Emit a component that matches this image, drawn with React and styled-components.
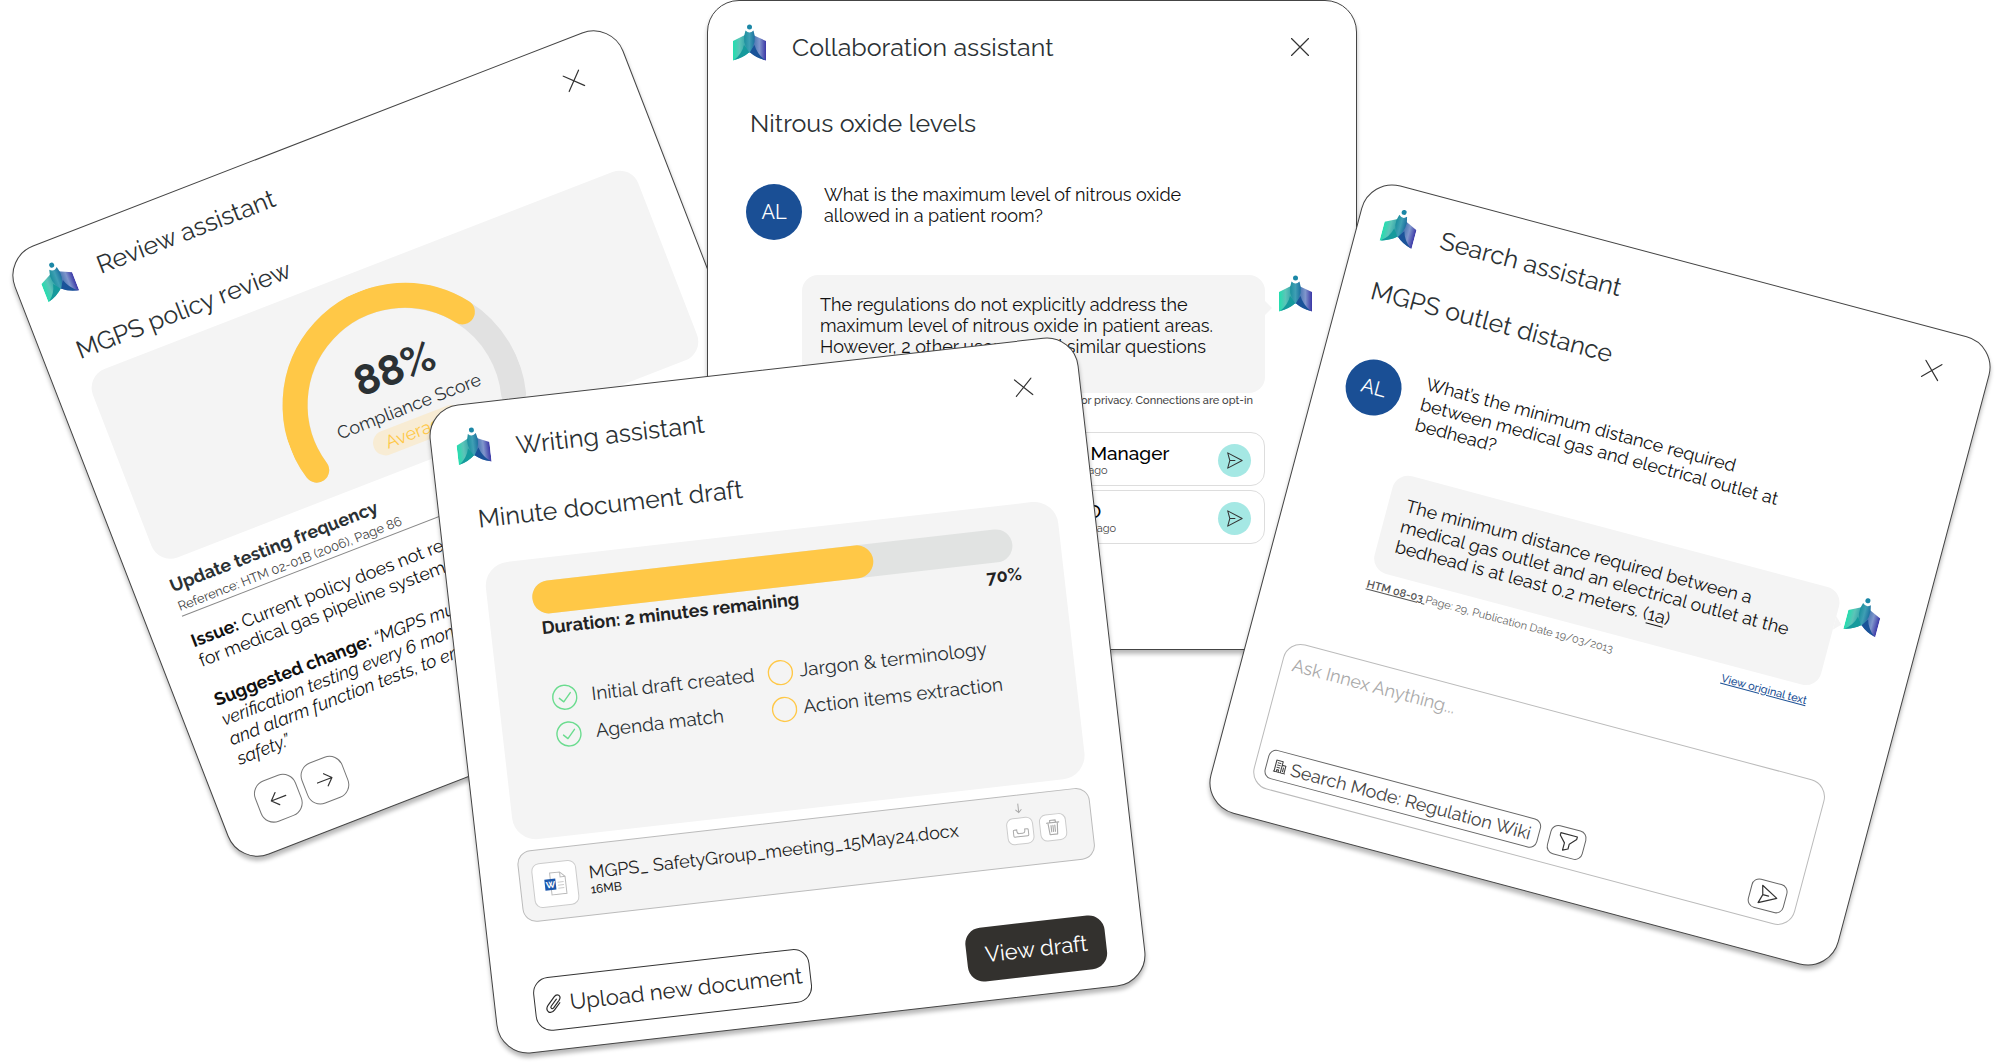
import React from "react";
import styled, { createGlobalStyle } from "styled-components";

const Logo = () => (
  <LogoSvg viewBox="0 0 33 37" aria-hidden="true">
    <defs>
      <linearGradient id="pageLeft" x1="0" y1="0" x2="1" y2="0">
        <stop offset="0" stopColor="#22dfae" />
        <stop offset="0.4" stopColor="#5cc4b8" />
        <stop offset="1" stopColor="#1d8fa0" />
      </linearGradient>
      <linearGradient id="pageRight" x1="0" y1="0" x2="1" y2="0">
        <stop offset="0" stopColor="#1f5f9f" />
        <stop offset="0.6" stopColor="#8096cc" />
        <stop offset="1" stopColor="#3a36a6" />
      </linearGradient>
      <linearGradient id="figure" x1="0" y1="0" x2="1" y2="0">
        <stop offset="0" stopColor="#1a8f9c" />
        <stop offset="0.5" stopColor="#3f9fb4" />
        <stop offset="1" stopColor="#1c6f9f" />
      </linearGradient>
    </defs>
    <path d="M0 17 L12 11 L16.500 28 Q9 34 0 36.500 Z" fill="url(#pageLeft)" />
    <path
      d="M33 17 L20 11 L16.500 28 Q24 34 33 36.500 Z"
      fill="url(#pageRight)"
    />
    <path d="M11 21 Q9 30 1 36 Q10 34 16.500 28 Z" fill="#159a9c" />
    <path d="M21.500 21 Q24 30 32 36 Q23 34 16.500 28 Z" fill="#1a5399" />
    <path
      d="M12.500 6.500 Q16.500 10.500 20.500 6.500 Q24.500 18 16.500 29 Q8 18 12.500 6.500 Z"
      fill="url(#figure)"
    />
    <circle cx="16.500" cy="3" r="2.500" fill="#1b87a6" />
  </LogoSvg>
);

const SendIcon = ({ size }) => (
  <Icon $size={size} viewBox="0 0 20 20" aria-hidden="true">
    <path d="M2 1 L19 10 L2 19 L4.500 10 Z M4.500 10 H10.500" />
  </Icon>
);

const CloseButton = () => (
  <Close type="button" aria-label="Close">
    <Icon $size={18} viewBox="0 0 18 18" aria-hidden="true">
      <path d="M0.500 0.500 L17.500 17.500 M17.500 0.500 L0.500 17.500" />
    </Icon>
  </Close>
);

const CardHeader = ({ title, tall }) => (
  <Header $tall={tall}>
    <Logo />
    <Title>{title}</Title>
    <CloseButton />
  </Header>
);

const Gauge = () => (
  <GaugeGrid>
    <GaugeSvg viewBox="0 0 244 164" aria-hidden="true">
      <path
        d="M16.400 151 A109.500 109.500 0 1 1 227.600 151"
        stroke="#e1e1e1"
      />
      <path
        d="M16.400 151 A109.500 109.500 0 0 1 209.500 56.100"
        stroke="#ffc847"
      />
    </GaugeSvg>
    <GaugeLabel>
      <Score>88%</Score>
      <ScoreName>Compliance Score</ScoreName>
      <Badge>Average</Badge>
    </GaugeLabel>
  </GaugeGrid>
);

const ReviewCard = () => (
  <Card $x={-901} $y={117} $size={653} $angle={-21.2} $shadow="-1px 4px">
    <CardHeader title="Review assistant" />
    <Heading $top={37} $left={34}>
      MGPS policy review
    </Heading>
    <ScorePanel>
      <Gauge />
    </ScorePanel>
    <Findings>
      <FindingTitle>Update testing frequency</FindingTitle>
      <Reference>Reference: HTM 02-01B (2006), Page 86</Reference>
      <Paragraph>
        <b>Issue:</b> Current policy does not require
        <br />
        for medical gas pipeline systems
      </Paragraph>
      <Paragraph>
        <b>Suggested change:</b>{" "}
        <i>
          “MGPS must
          <br />
          verification testing every 6 months
          <br />
          and alarm function tests, to ensure
          <br />
          safety.”
        </i>
      </Paragraph>
      <Pager>
        <PagerButton type="button" aria-label="Previous">
          <Icon $size={18} viewBox="0 0 18 18" aria-hidden="true">
            <path d="M17 9 H1.500 M8 2.500 L1.500 9 L8 15.500" />
          </Icon>
        </PagerButton>
        <PagerButton type="button" aria-label="Next">
          <Icon $size={18} viewBox="0 0 18 18" aria-hidden="true">
            <path d="M1 9 H16.500 M10 2.500 L16.500 9 L10 15.500" />
          </Icon>
        </PagerButton>
      </Pager>
    </Findings>
  </Card>
);

const contacts = [
  { name: "Facility Manager", seen: "Seen 5 days ago" },
  { name: "Site CSO", seen: "Seen 2 weeks ago" },
];

const CollaborationCard = () => (
  <Card $x={-293} $y={0} $size={650} $angle={0} $shadow="0 4px">
    <CardHeader title="Collaboration assistant" tall />
    <Heading $top={38} $left={42}>
      Nitrous oxide levels
    </Heading>
    <Question $top={46} $left={38}>
      <Avatar>AL</Avatar>
      <Text>
        What is the maximum level of nitrous oxide
        <br />
        allowed in a patient room?
      </Text>
    </Question>
    <Answer $top={35} $left={94} $right={44} $gap={14}>
      <Bubble $height={118}>
        The regulations do not explicitly address the
        <br />
        maximum level of nitrous oxide in patient areas.
        <br />
        However, 2 other users asked similar questions
      </Bubble>
      <Logo />
    </Answer>
    <Contacts>
      <Privacy>for privacy. Connections are opt-in</Privacy>
      {contacts.map(({ name, seen }) => (
        <Contact key={name}>
          <div>
            <ContactName>{name}</ContactName>
            <ContactSeen>{seen}</ContactSeen>
          </div>
          <RoundButton type="button" aria-label={`Message ${name}`}>
            <SendIcon size={17} />
          </RoundButton>
        </Contact>
      ))}
    </Contacts>
  </Card>
);

const steps = [
  { text: "Initial draft created", done: true },
  { text: "Jargon & terminology", done: false },
  { text: "Agenda match", done: true },
  { text: "Action items extraction", done: false },
];

const Step = ({ text, done }) => (
  <StepItem $done={done}>
    <StepSvg viewBox="0 0 26 26" aria-hidden="true" $done={done}>
      <circle cx="13" cy="13" r="12" />
      {done && <path d="M7.500 13.500 L11.500 17.500 L19 9" />}
    </StepSvg>
    {text}
  </StepItem>
);

const WritingCard = () => (
  <Card $x={-539} $y={369} $size={653} $angle={-6.5} $shadow="0 4px">
    <CardHeader title="Writing assistant" tall />
    <Heading $top={31} $left={38}>
      Minute document draft
    </Heading>
    <DraftPanel>
      <Track role="progressbar" aria-label="Draft" aria-valuenow={70}>
        <Fill />
      </Track>
      <ProgressText>
        <span>Duration: 2 minutes remaining</span>
        <span>70%</span>
      </ProgressText>
      <Steps>
        {steps.map((step) => (
          <Step key={step.text} {...step} />
        ))}
      </Steps>
    </DraftPanel>
    <FileRow>
      <FileTile>
        <WordSvg viewBox="0 0 24 24" aria-hidden="true">
          <path
            d="M7 1 H17 L22 6 V23 H7 Z M17 1 V6 H22"
            fill="#fff"
            stroke="#bbb"
          />
          <path d="M14 11 H20 M14 14 H20 M14 17 H20" stroke="#ccc" />
          <rect x="1" y="7" width="11" height="11" fill="#1b57ad" />
          <text x="2" y="16">
            W
          </text>
        </WordSvg>
      </FileTile>
      <FileInfo>
        <FileName>MGPS_ SafetyGroup_meeting_15May24.docx</FileName>
        <FileSize>16MB</FileSize>
      </FileInfo>
      <TileButton type="button" aria-label="Download">
        <DownloadSvg viewBox="0 0 18 40" aria-hidden="true">
          <path d="M9 1 V10 M6 7 L9 10 L12 7" />
          <path d="M1.500 28 Q1.500 27 2.500 27 H5 V28.500 Q5 31 7.500 31 H10.500 Q13 31 13 28.500 V27 H15.500 Q16.500 27 16.500 28 V33 Q16.500 34 15.500 34 H2.500 Q1.500 34 1.500 33 Z" />
        </DownloadSvg>
      </TileButton>
      <TileButton type="button" aria-label="Delete">
        <Icon $size={17} viewBox="0 0 18 18" aria-hidden="true">
          <path d="M2.500 4 H15.500 M6 4 V1.500 H12 V4 M4 4 L5 16.500 H13 L14 4 M7 7 V13.500 M9 7 V13.500 M11 7 V13.500" />
        </Icon>
      </TileButton>
    </FileRow>
    <Actions>
      <OutlineButton type="button">
        <Icon $size={20} viewBox="0 0 20 20" aria-hidden="true">
          <path d="M13.500 6 L7.500 12.500 Q6.500 14 7.700 14.800 Q8.800 15.500 9.800 14.300 L16 7.500 Q18.500 4.500 16.300 2.500 Q14 0.800 11.500 3.500 L4.500 11.200 Q1.500 15 4.200 17.800 Q7.200 20 10.500 16.500 L16.500 10" />
        </Icon>
        Upload new document
      </OutlineButton>
      <DarkButton type="button">View draft</DarkButton>
    </Actions>
  </Card>
);

const SearchCard = () => (
  <Card $x={275} $y={250} $size={650} $angle={14.9} $shadow="1px 4px">
    <CardHeader title="Search assistant" />
    <Heading $top={31} $left={30}>
      MGPS outlet distance
    </Heading>
    <Question $top={51} $left={29}>
      <Avatar>AL</Avatar>
      <Text>
        What’s the minimum distance required
        <br />
        between medical gas and electrical outlet at
        <br />
        bedhead?
      </Text>
    </Question>
    <Answer $top={41} $left={101} $right={42} $gap={10}>
      <Bubble $height={101}>
        The minimum distance required between a
        <br />
        medical gas outlet and an electrical outlet at the
        <br />
        bedhead is at least 0.2 meters. (<CiteLink href="#source">1a</CiteLink>)
      </Bubble>
      <Logo />
    </Answer>
    <Source id="source">
      <span>
        <SourceLink href="#htm">HTM 08-03 </SourceLink>Page: 29, Publication
        Date 19/03/2013
      </span>
      <OriginalLink href="#original">View original text</OriginalLink>
    </Source>
    <Prompt>
      <PromptInput
        aria-label="Ask Innex"
        placeholder="Ask Innex Anything..."
      />
      <PromptBar>
        <ModeButton type="button">
          <Icon $size={13} viewBox="0 0 14 14" aria-hidden="true">
            <path d="M0.500 13.500 H13.500 M1.500 13.500 V1 H8.500 V13.500 M8.500 5 H12.500 V13.500 M3.500 3.500 H4.500 M5.500 3.500 H6.500 M3.500 6 H4.500 M5.500 6 H6.500 M3.500 8.500 H6.500 M4 13.500 V11 H6 V13.500 M10.500 7.500 V11.500" />
          </Icon>
          Search Mode: Regulation Wiki
        </ModeButton>
        <SquareButton type="button" aria-label="Filter">
          <Icon $size={20} viewBox="0 0 20 20" aria-hidden="true">
            <path d="M1.500 2 H18.500 V4.500 L12.500 11 V16 L7.500 18.500 V11 L1.500 4.500 Z" />
          </Icon>
        </SquareButton>
        <Grow />
        <SquareButton type="button" aria-label="Send">
          <SendIcon size={20} />
        </SquareButton>
      </PromptBar>
    </Prompt>
  </Card>
);

const App = () => {
  return (
    <>
      <GlobalStyle />
      <Canvas>
        <ReviewCard />
        <CollaborationCard />
        <WritingCard />
        <SearchCard />
      </Canvas>
    </>
  );
};

const GlobalStyle = createGlobalStyle`
  * {
    box-sizing: border-box;
  }
  body {
    margin: 0;
    background: #fff;
    color: #111;
    font-family: Raleway, Lato, "Open Sans", sans-serif;
    font-size: 18px;
    line-height: 21px;
  }
  button, textarea {
    font-family: inherit;
    color: inherit;
  }
`;
const Canvas = styled.main`
  position: relative;
  width: 100%;
  min-height: 100vh;
  overflow: hidden;
`;
const Card = styled.section`
  position: absolute;
  left: calc(50% + ${(props) => props.$x}px);
  top: ${(props) => props.$y}px;
  width: ${(props) => props.$size}px;
  height: ${(props) => props.$size}px;
  display: flex;
  flex-direction: column;
  background-color: #fff;
  border: 1px solid #444;
  border-radius: 32px;
  box-shadow: ${(props) => props.$shadow} 4px rgba(0, 0, 0, 0.28);
  transform: rotate(${(props) => props.$angle}deg);
`;
const Header = styled.header`
  display: flex;
  align-items: center;
  gap: 26px;
  height: ${(props) => (props.$tall ? 69 : 61)}px;
  padding: ${(props) => (props.$tall ? 23 : 21)}px 47px 0 25px;
`;
const LogoSvg = styled.svg`
  width: 33px;
  height: 37px;
  flex: none;
  align-self: flex-start;
`;
const Title = styled.h2`
  flex: 1;
  margin: 0;
  font-size: 25px;
  line-height: 30px;
  font-weight: 400;
  color: #2b3134;
`;
const Icon = styled.svg`
  width: ${(props) => props.$size}px;
  height: ${(props) => props.$size}px;
  flex: none;
  display: block;
  fill: none;
  stroke: currentColor;
  stroke-width: 1.2;
  stroke-linecap: round;
  stroke-linejoin: round;
`;
const Close = styled.button`
  padding: 0;
  border: 0;
  background: none;
  color: #333;
`;
const Heading = styled.h3`
  margin: ${(props) => props.$top}px 0 0 ${(props) => props.$left}px;
  font-size: 25px;
  line-height: 30px;
  font-weight: 400;
  color: #2b3134;
`;

const ScorePanel = styled.div`
  display: flex;
  justify-content: center;
  height: 202px;
  margin: 12px 33px 0 33px;
  padding: 20px 4px 0 0;
  border-radius: 20px;
  background-color: #f4f4f4;
`;
const GaugeGrid = styled.div`
  display: grid;
  justify-items: center;
  align-items: start;
`;
const GaugeSvg = styled.svg`
  grid-area: 1 / 1;
  width: 244px;
  height: 164px;
  margin-right: 8px;
  fill: none;
  stroke-width: 25;

  path {
    stroke-linecap: round;
  }
`;
const GaugeLabel = styled.div`
  grid-area: 1 / 1;
  display: flex;
  flex-direction: column;
  align-items: center;
  padding-top: 59px;
`;
const Score = styled.div`
  font-size: 42px;
  line-height: 52px;
  font-weight: 700;
  color: #2b3134;
`;
const ScoreName = styled.div`
  line-height: 27px;
  color: #2b3134;
`;
const Badge = styled.div`
  padding: 2px 13px;
  border-radius: 13px;
  background-color: #f8ecd4;
  color: #ffc847;
`;
const Findings = styled.div`
  display: flex;
  flex-direction: column;
  margin: 14px 33px 0 36px;
`;
const FindingTitle = styled.h4`
  margin: 0;
  font-size: 18px;
  line-height: 21px;
  color: #2b3134;
`;
const Reference = styled.div`
  margin-bottom: 16px;
  padding-top: 2px;
  border-bottom: 1px solid #888;
  font-size: 13px;
  line-height: 19px;
  color: #444;
`;
const Paragraph = styled.p`
  margin: 0;

  & + & {
    margin-top: 21px;
  }
`;
const Pager = styled.div`
  display: flex;
  gap: 6px;
  margin-top: 19px;
  padding-left: 2px;
`;
const PagerButton = styled.button`
  display: flex;
  align-items: center;
  justify-content: center;
  width: 44px;
  height: 44px;
  padding: 0;
  border: 1px solid #777;
  border-radius: 14px;
  background-color: #fff;
  color: #333;
`;

const Question = styled.div`
  display: flex;
  align-items: flex-start;
  gap: 22px;
  margin: ${(props) => props.$top}px 0 0 ${(props) => props.$left}px;
`;
const Avatar = styled.div`
  display: flex;
  align-items: center;
  justify-content: center;
  width: 56px;
  height: 56px;
  border-radius: 50%;
  background-color: #1a4f95;
  color: #fff;
  font-size: 20px;
`;
const Text = styled.p`
  margin: 0;
`;
const Answer = styled.div`
  display: flex;
  align-items: flex-start;
  gap: ${(props) => props.$gap}px;
  margin: ${(props) => props.$top}px ${(props) => props.$right}px 0
    ${(props) => props.$left}px;
`;
const Bubble = styled.div`
  position: relative;
  flex: 1;
  min-height: ${(props) => props.$height}px;
  padding: 19px 0 14px 18px;
  border-radius: 16px;
  background-color: #f4f4f4;
  white-space: nowrap;

  &::after {
    content: "";
    position: absolute;
    left: 100%;
    top: 26px;
    border: 7px solid transparent;
    border-left-color: #f4f4f4;
    border-right-width: 0;
  }
`;
const Contacts = styled.div`
  display: flex;
  flex-direction: column;
  gap: 4px;
  margin: 0 91px 0 94px;
`;
const Privacy = styled.div`
  margin-bottom: 20px;
  padding-right: 12px;
  font-size: 11px;
  line-height: 15px;
  font-weight: 500;
  text-align: right;
  color: #444;
`;
const Contact = styled.div`
  display: flex;
  align-items: center;
  justify-content: space-between;
  height: 54px;
  padding: 2px 13px 0 221px;
  border: 1px solid #ddd;
  border-radius: 14px;
`;
const ContactName = styled.div`
  font-size: 19px;
  font-weight: 500;
  color: #000;
`;
const ContactSeen = styled.div`
  font-size: 11px;
  line-height: 14px;
  color: #444;
`;
const RoundButton = styled.button`
  display: flex;
  align-items: center;
  justify-content: center;
  width: 33px;
  height: 33px;
  padding: 0;
  border: 0;
  border-radius: 50%;
  background-color: #a5e8e4;
  color: #333;
`;

const DraftPanel = styled.div`
  height: 279px;
  margin: 31px 37px 0 38px;
  padding: 23px 48px 0 45px;
  border-radius: 24px;
  background-color: #f4f4f4;
`;
const Track = styled.div`
  height: 33px;
  border-radius: 17px;
  background-color: #e1e3e2;
`;
const Fill = styled.div`
  width: 71%;
  height: 100%;
  border-radius: 17px;
  background-color: #ffc847;
`;
const ProgressText = styled.div`
  display: flex;
  justify-content: space-between;
  margin-right: -6px;
  padding: 3px 0 0 6px;
  font-weight: 700;
  color: #222;
`;
const Steps = styled.ul`
  display: grid;
  grid-template-columns: 217px auto;
  margin: 42px 0 0;
  padding: 0 0 0 8px;
  list-style: none;
`;
const StepItem = styled.li`
  display: flex;
  align-items: center;
  gap: ${(props) => (props.$done ? 14 : 6)}px;
  height: 37px;
  font-size: 19px;
  white-space: nowrap;
  color: #2b3134;
`;
const StepSvg = styled.svg`
  width: 26px;
  height: 26px;
  flex: none;
  fill: none;
  stroke: ${(props) => (props.$done ? "#6bdc8f" : "#ffc847")};
  stroke-width: 1.4;
  stroke-linecap: round;
  stroke-linejoin: round;
`;
const FileRow = styled.div`
  display: flex;
  align-items: center;
  gap: 6px;
  height: 72px;
  margin: 10px 37px 0 38px;
  padding: 0 25px 0 12px;
  border: 1px solid #bbb;
  border-radius: 14px;
  background-color: #f4f4f4;
`;
const FileTile = styled.div`
  display: flex;
  align-items: center;
  justify-content: center;
  width: 45px;
  height: 45px;
  border: 1px solid #ccc;
  border-radius: 8px;
  background-color: #fff;
`;
const WordSvg = styled.svg`
  width: 24px;
  height: 24px;

  text {
    font-size: 9px;
    font-weight: 700;
    fill: #fff;
  }
`;
const FileInfo = styled.div`
  flex: 1;
  padding-left: 6px;
  white-space: nowrap;
  color: #222;
`;
const FileName = styled.div`
  line-height: 21px;
`;
const FileSize = styled.div`
  font-size: 12px;
  line-height: 15px;
  font-weight: 500;
`;
const TileButton = styled.button`
  display: flex;
  align-items: center;
  justify-content: center;
  width: 27px;
  height: 27px;
  padding: 0;
  border: 1px solid #ccc;
  border-radius: 7px;
  background-color: #fff;
  color: #aaa;
`;
const DownloadSvg = styled.svg`
  width: 18px;
  height: 40px;
  flex: none;
  margin-bottom: 16px;
  fill: none;
  stroke: #aaa;
`;
const Actions = styled.div`
  display: flex;
  justify-content: space-between;
  margin: 56px 37px 0 39px;
`;
const OutlineButton = styled.button`
  display: flex;
  align-items: center;
  justify-content: center;
  gap: 7px;
  width: 278px;
  height: 54px;
  padding: 0;
  border: 1px solid #333;
  border-radius: 16px;
  background-color: #fff;
  color: #2b2b2b;
  font-size: 22px;
  white-space: nowrap;
`;
const DarkButton = styled.button`
  width: 140px;
  height: 54px;
  padding: 0;
  border: 0;
  border-radius: 16px;
  background-color: #33312e;
  color: #fff;
  font-size: 22px;
`;

const CiteLink = styled.a`
  color: inherit;
  text-underline-offset: 3px;
`;
const Source = styled.div`
  display: flex;
  justify-content: space-between;
  margin: 4px 92px 0 101px;
  font-size: 11px;
  color: #666;
`;
const SourceLink = styled.a`
  font-weight: 600;
  color: #555;
  white-space: pre;
`;
const OriginalLink = styled.a`
  font-weight: 500;
  color: #1a4f95;
`;
const Prompt = styled.div`
  display: flex;
  flex-direction: column;
  height: 150px;
  margin: 64px 49px 0 39px;
  padding: 10px 11px 10px 10px;
  border: 1px solid #bbb;
  border-radius: 18px;
`;
const PromptInput = styled.textarea`
  flex: 1;
  min-height: 0;
  padding: 0;
  border: 0;
  outline: none;
  resize: none;
  background: none;
  font-size: 18px;
  line-height: 24px;

  &::placeholder {
    color: #aaa;
  }
`;
const PromptBar = styled.div`
  display: flex;
  align-items: center;
  gap: 10px;
`;
const ModeButton = styled.button`
  display: flex;
  align-items: center;
  justify-content: center;
  gap: 4px;
  width: 282px;
  height: 30px;
  padding: 0;
  border: 1px solid #666;
  border-radius: 8px;
  background-color: #fff;
  color: #444;
  font-size: 18px;
  white-space: nowrap;
`;
const SquareButton = styled.button`
  display: flex;
  align-items: center;
  justify-content: center;
  width: 37px;
  height: 30px;
  padding: 0;
  border: 1px solid #666;
  border-radius: 8px;
  background-color: #fff;
  color: #333;
`;
const Grow = styled.div`
  flex: 1;
`;

export default App;
